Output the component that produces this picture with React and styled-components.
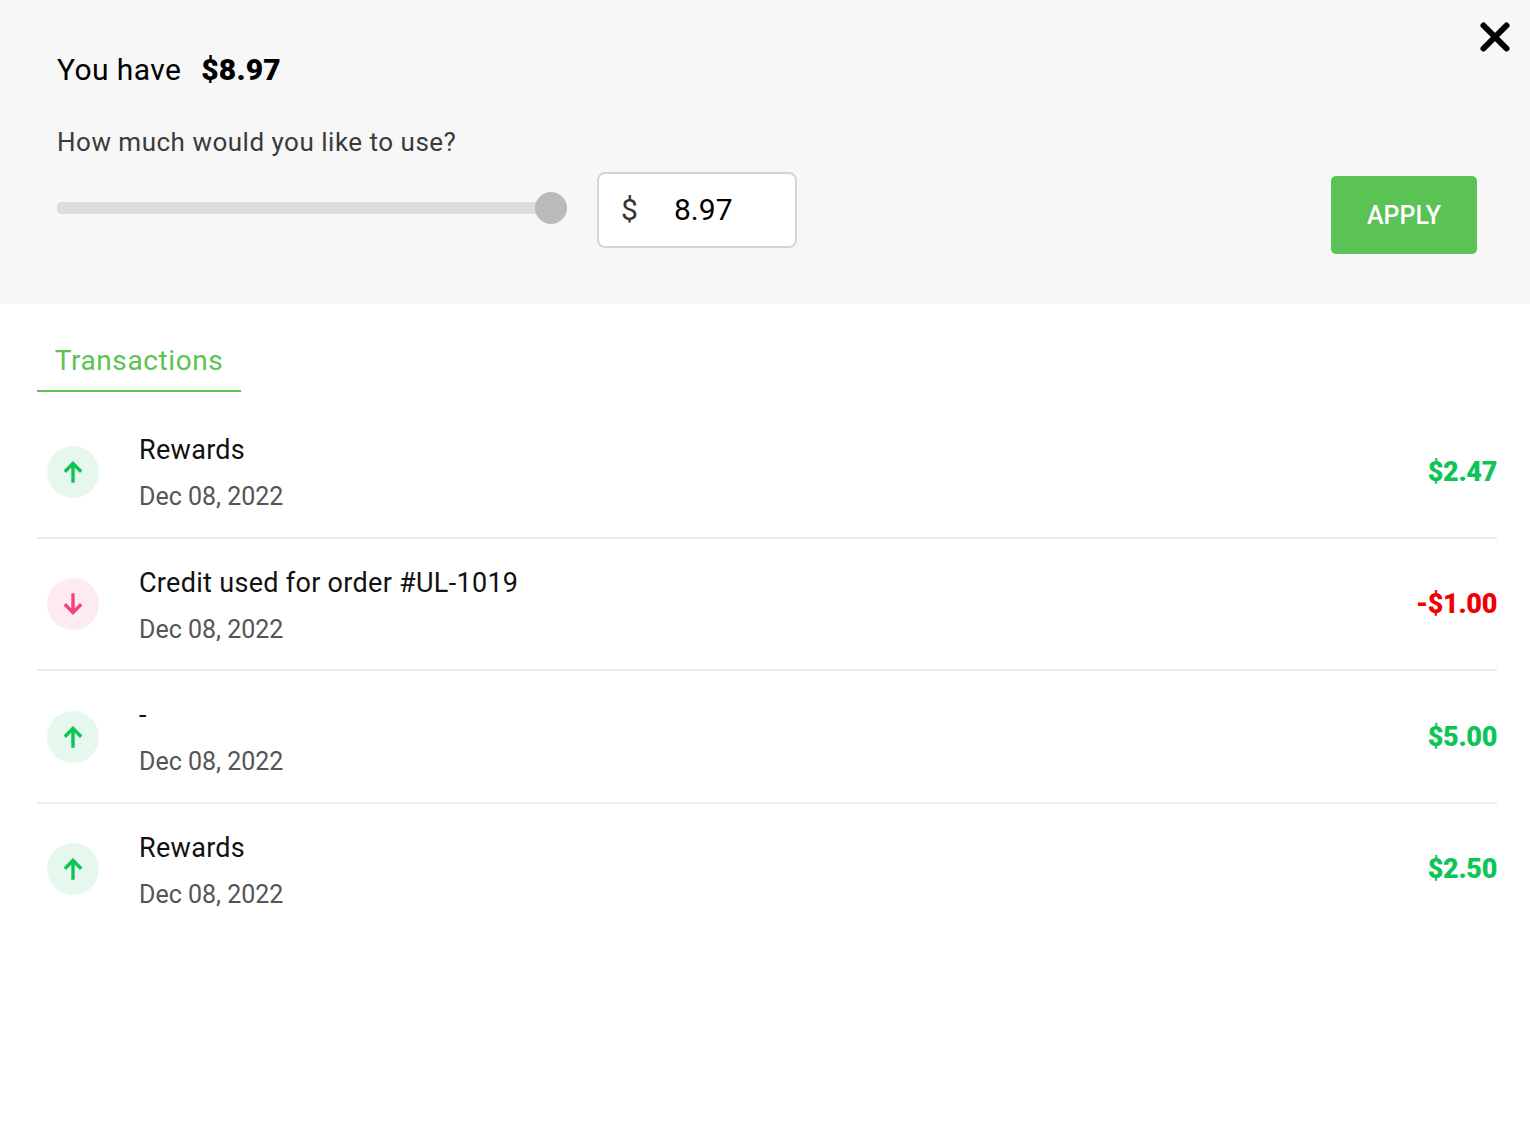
import React from 'react';
import styled, { createGlobalStyle } from 'styled-components';

const GlobalStyle = createGlobalStyle`
  * { box-sizing: border-box; }
  body {
    margin: 0;
    background: #fff;
    font-family: Roboto, "Liberation Sans", sans-serif;
  }
`;

const Page = styled.div`
  position: relative;
  width: 1530px;
  min-height: 1127px;
  background: #fff;
`;

const Header = styled.section`
  height: 304px;
  padding: 50px 53px 0 57px;
  background: #f7f7f7;
`;

const CloseButton = styled.button`
  position: absolute;
  top: 21px;
  right: 19px;
  width: 32px;
  height: 32px;
  padding: 0;
  border: 0;
  background: none;
  color: #000;
`;

const Balance = styled.div`
  display: flex;
  gap: 20px;
  height: 38px;
  align-items: center;
  font-size: 30px;
  letter-spacing: 0.4px;
  color: #000;
`;

const BalanceAmount = styled.strong`
  font-weight: 900;
  letter-spacing: 0.2px;
`;

const Question = styled.div`
  margin-top: 38px;
  height: 32px;
  line-height: 32px;
  font-size: 26px;
  letter-spacing: 0.5px;
  color: #3a3a3a;
`;

const Controls = styled.div`
  display: flex;
  align-items: flex-start;
  margin-top: 14px;
`;

const SliderWrap = styled.div`
  position: relative;
  width: 510px;
  height: 76px;
  display: flex;
  align-items: center;
`;

const SliderTrack = styled.div`
  width: 503px;
  height: 12px;
  margin-bottom: 4px;
  border-radius: 4px;
  background: #ddd;
`;

const SliderThumb = styled.div`
  position: absolute;
  right: 0;
  top: 20px;
  width: 32px;
  height: 32px;
  border-radius: 50%;
  background: #bbb;
`;

const AmountBox = styled.div`
  display: flex;
  align-items: center;
  width: 200px;
  height: 76px;
  margin-left: 30px;
  padding: 0 0 0 22px;
  border: 2px solid #d2d5d9;
  border-radius: 8px;
  background: #fff;
  font-size: 30px;
  line-height: 72px;
`;

const Currency = styled.span`
  width: 53px;
  color: #333;
`;

const AmountValue = styled.span`
  color: #000;
`;

const ApplyButton = styled.button`
  margin: 4px 0 0 auto;
  width: 146px;
  height: 78px;
  border: 0;
  border-radius: 5px;
  background: #5bc254;
  color: #fff;
  font-family: inherit;
  font-size: 25px;
  font-weight: 500;
`;

const Body = styled.section`
  padding: 0 33px 0 37px;
`;

const Tab = styled.div`
  display: flex;
  align-items: center;
  justify-content: center;
  width: 204px;
  height: 88px;
  padding-top: 26px;
  border-bottom: 2px solid #5bc254;
  color: #5bc254;
  font-size: 28px;
  letter-spacing: 0.6px;
`;

const List = styled.div`
  margin-top: 14px;
`;

const Row = styled.div`
  display: flex;
  align-items: center;
  height: 132.5px;
  padding: 1px 0 0 10px;
  border-bottom: 2px solid ${({ $last }) => ($last ? 'transparent' : '#ececec')};
`;

const IconCircle = styled.div`
  display: flex;
  align-items: center;
  justify-content: center;
  flex: none;
  width: 52px;
  height: 52px;
  border-radius: 50%;
  background: ${({ $up }) => ($up ? '#e6f8ee' : '#fdeaf2')};
  color: ${({ $up }) => ($up ? '#0cc556' : '#f0457f')};
`;

const Info = styled.div`
  margin-left: 40px;
  flex: 1;
`;

const Title = styled.div`
  height: 51px;
  line-height: 40px;
  font-size: 27px;
  letter-spacing: 0.3px;
  color: #111;
`;

const DateText = styled.div`
  line-height: 32px;
  font-size: 25px;
  color: #555;
`;

const Amount = styled.div`
  font-size: 27px;
  font-weight: 900;
  letter-spacing: -0.3px;
  color: ${({ $up }) => ($up ? '#0cc556' : '#f00000')};
`;

const transactions = [
  { title: 'Rewards', date: 'Dec 08, 2022', amount: '$2.47', up: true },
  { title: 'Credit used for order #UL-1019', date: 'Dec 08, 2022', amount: '-$1.00', up: false },
  { title: '-', date: 'Dec 08, 2022', amount: '$5.00', up: true },
  { title: 'Rewards', date: 'Dec 08, 2022', amount: '$2.50', up: true }
];

const Arrow = ({ up }) => (
  <svg width="24" height="24" viewBox="0 0 24 24" fill="none" stroke="currentColor" strokeWidth="3.4" strokeLinecap="square">
    {up ? <path d="M12 21V4M5 10.5L12 3.5l7 7" /> : <path d="M12 3v17M5 13.5l7 7 7-7" />}
  </svg>
);

const App = () => (
  <Page>
    <GlobalStyle />
    <Header>
      <CloseButton aria-label="Close">
        <svg width="32" height="32" viewBox="0 0 32 32" fill="none" stroke="currentColor" strokeWidth="6" strokeLinecap="round">
          <path d="M4.5 4.5l23 23M27.5 4.5l-23 23" />
        </svg>
      </CloseButton>
      <Balance>
        <span>You have</span>
        <BalanceAmount>$8.97</BalanceAmount>
      </Balance>
      <Question>How much would you like to use?</Question>
      <Controls>
        <SliderWrap>
          <SliderTrack />
          <SliderThumb />
        </SliderWrap>
        <AmountBox>
          <Currency>$</Currency>
          <AmountValue>8.97</AmountValue>
        </AmountBox>
        <ApplyButton>APPLY</ApplyButton>
      </Controls>
    </Header>
    <Body>
      <Tab>Transactions</Tab>
      <List>
        {transactions.map((item, i) => (
          <Row key={i} $last={i === transactions.length - 1}>
            <IconCircle $up={item.up}>
              <Arrow up={item.up} />
            </IconCircle>
            <Info>
              <Title>{item.title}</Title>
              <DateText>{item.date}</DateText>
            </Info>
            <Amount $up={item.up}>{item.amount}</Amount>
          </Row>
        ))}
      </List>
    </Body>
  </Page>
);

export default App;
